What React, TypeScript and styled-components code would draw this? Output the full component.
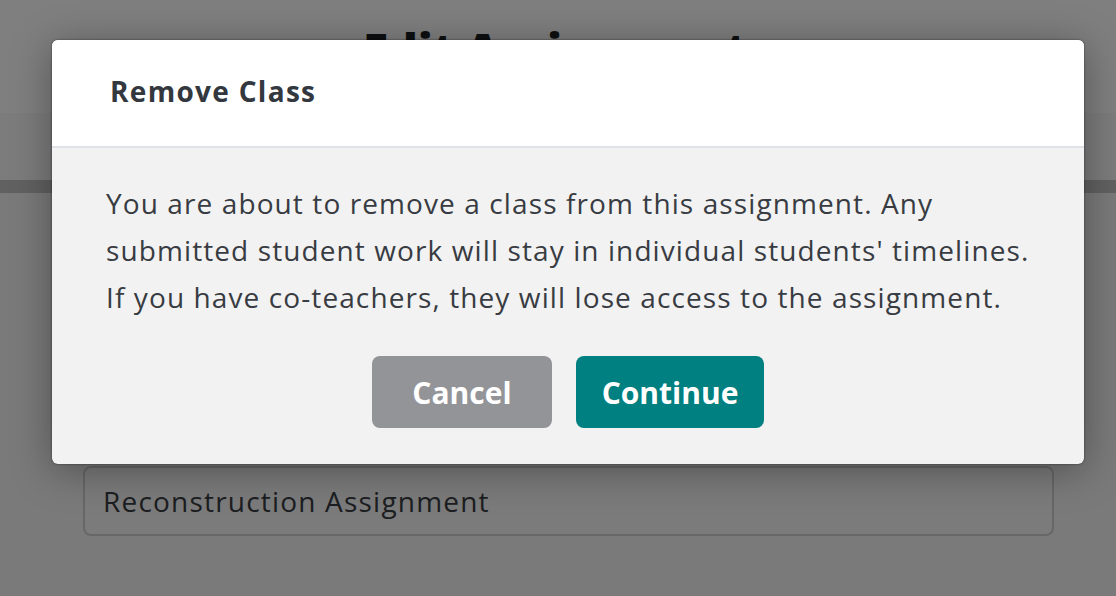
import styled, { createGlobalStyle } from "styled-components";

const GlobalStyle = createGlobalStyle`
  html, body {
    margin: 0;
    padding: 0;
    background: #ffffff;
    font-family: "Open Sans", Lato, sans-serif;
  }
  * {
    box-sizing: border-box;
  }
`;

const Page = styled.div`
  position: relative;
  width: 1116px;
  height: 596px;
  overflow: hidden;
  background: #f4f4f4;
`;

const PageHeader = styled.header`
  height: 113px;
  background: #ffffff;
  display: flex;
  justify-content: center;
  padding-top: 18px;
  padding-right: 6px;

  h1 {
    margin: 0;
    font-size: 46px;
    font-weight: 800;
    color: #1d1f23;
  }
`;

const SubNav = styled.div`
  height: 67px;
  background: #f8f8f8;
`;

const Divider = styled.div`
  height: 13px;
  background: #c2c2c2;
`;

const Content = styled.main`
  padding: 273px 62px 0 83px;
`;

const TextInput = styled.div`
  height: 70px;
  border: 2px solid #cfcfd2;
  border-radius: 8px;
  background: #f6f6f6;
  display: flex;
  align-items: center;
  padding-left: 18px;
  font-size: 28px;
  letter-spacing: 1.2px;
  color: #3a3d42;
`;

const Overlay = styled.div`
  position: absolute;
  inset: 0;
  background: rgba(0, 0, 0, 0.5);
`;

const Modal = styled.div`
  position: absolute;
  left: 52px;
  top: 40px;
  width: 1032px;
  height: 424px;
  border-radius: 6px;
  overflow: hidden;
  background: #f2f2f2;
  box-shadow: 0 0 2px rgba(0, 0, 0, 0.6), 0 6px 40px rgba(0, 0, 0, 0.35);
  display: flex;
  flex-direction: column;
`;

const ModalHeader = styled.div`
  height: 108px;
  background: #ffffff;
  border-bottom: 2px solid #dfe2e6;
  display: flex;
  align-items: center;
  padding: 0 58px 4px;

  h2 {
    margin: 0;
    font-size: 28px;
    font-weight: 700;
    letter-spacing: 1.3px;
    color: #33383f;
  }
`;

const ModalBody = styled.div`
  padding: 32px 54px 0;

  p {
    margin: 0;
    font-size: 28px;
    line-height: 47px;
    letter-spacing: 1.1px;
    color: #383c42;
    white-space: nowrap;
  }
`;

const Actions = styled.div`
  display: flex;
  justify-content: center;
  gap: 24px;
  margin-top: 35px;
`;

const Button = styled.button<{ $primary?: boolean; $width: number }>`
  width: ${(p) => p.$width}px;
  height: 72px;
  border: none;
  border-radius: 8px;
  background: ${(p) => (p.$primary ? "#008080" : "#939498")};
  color: #ffffff;
  font-family: inherit;
  font-size: 30px;
  font-weight: 700;
`;

export default function App() {
  return (
    <Page>
      <GlobalStyle />
      <PageHeader>
        <h1>Edit Assignment</h1>
      </PageHeader>
      <SubNav />
      <Divider />
      <Content>
        <TextInput>Reconstruction Assignment</TextInput>
      </Content>
      <Overlay />
      <Modal>
        <ModalHeader>
          <h2>Remove Class</h2>
        </ModalHeader>
        <ModalBody>
          <p>
            You are about to remove a class from this assignment. Any
            <br />
            submitted student work will stay in individual students' timelines.
            <br />
            If you have co-teachers, they will lose access to the assignment.
          </p>
          <Actions>
            <Button $width={180}>Cancel</Button>
            <Button $primary $width={188}>
              Continue
            </Button>
          </Actions>
        </ModalBody>
      </Modal>
    </Page>
  );
}
